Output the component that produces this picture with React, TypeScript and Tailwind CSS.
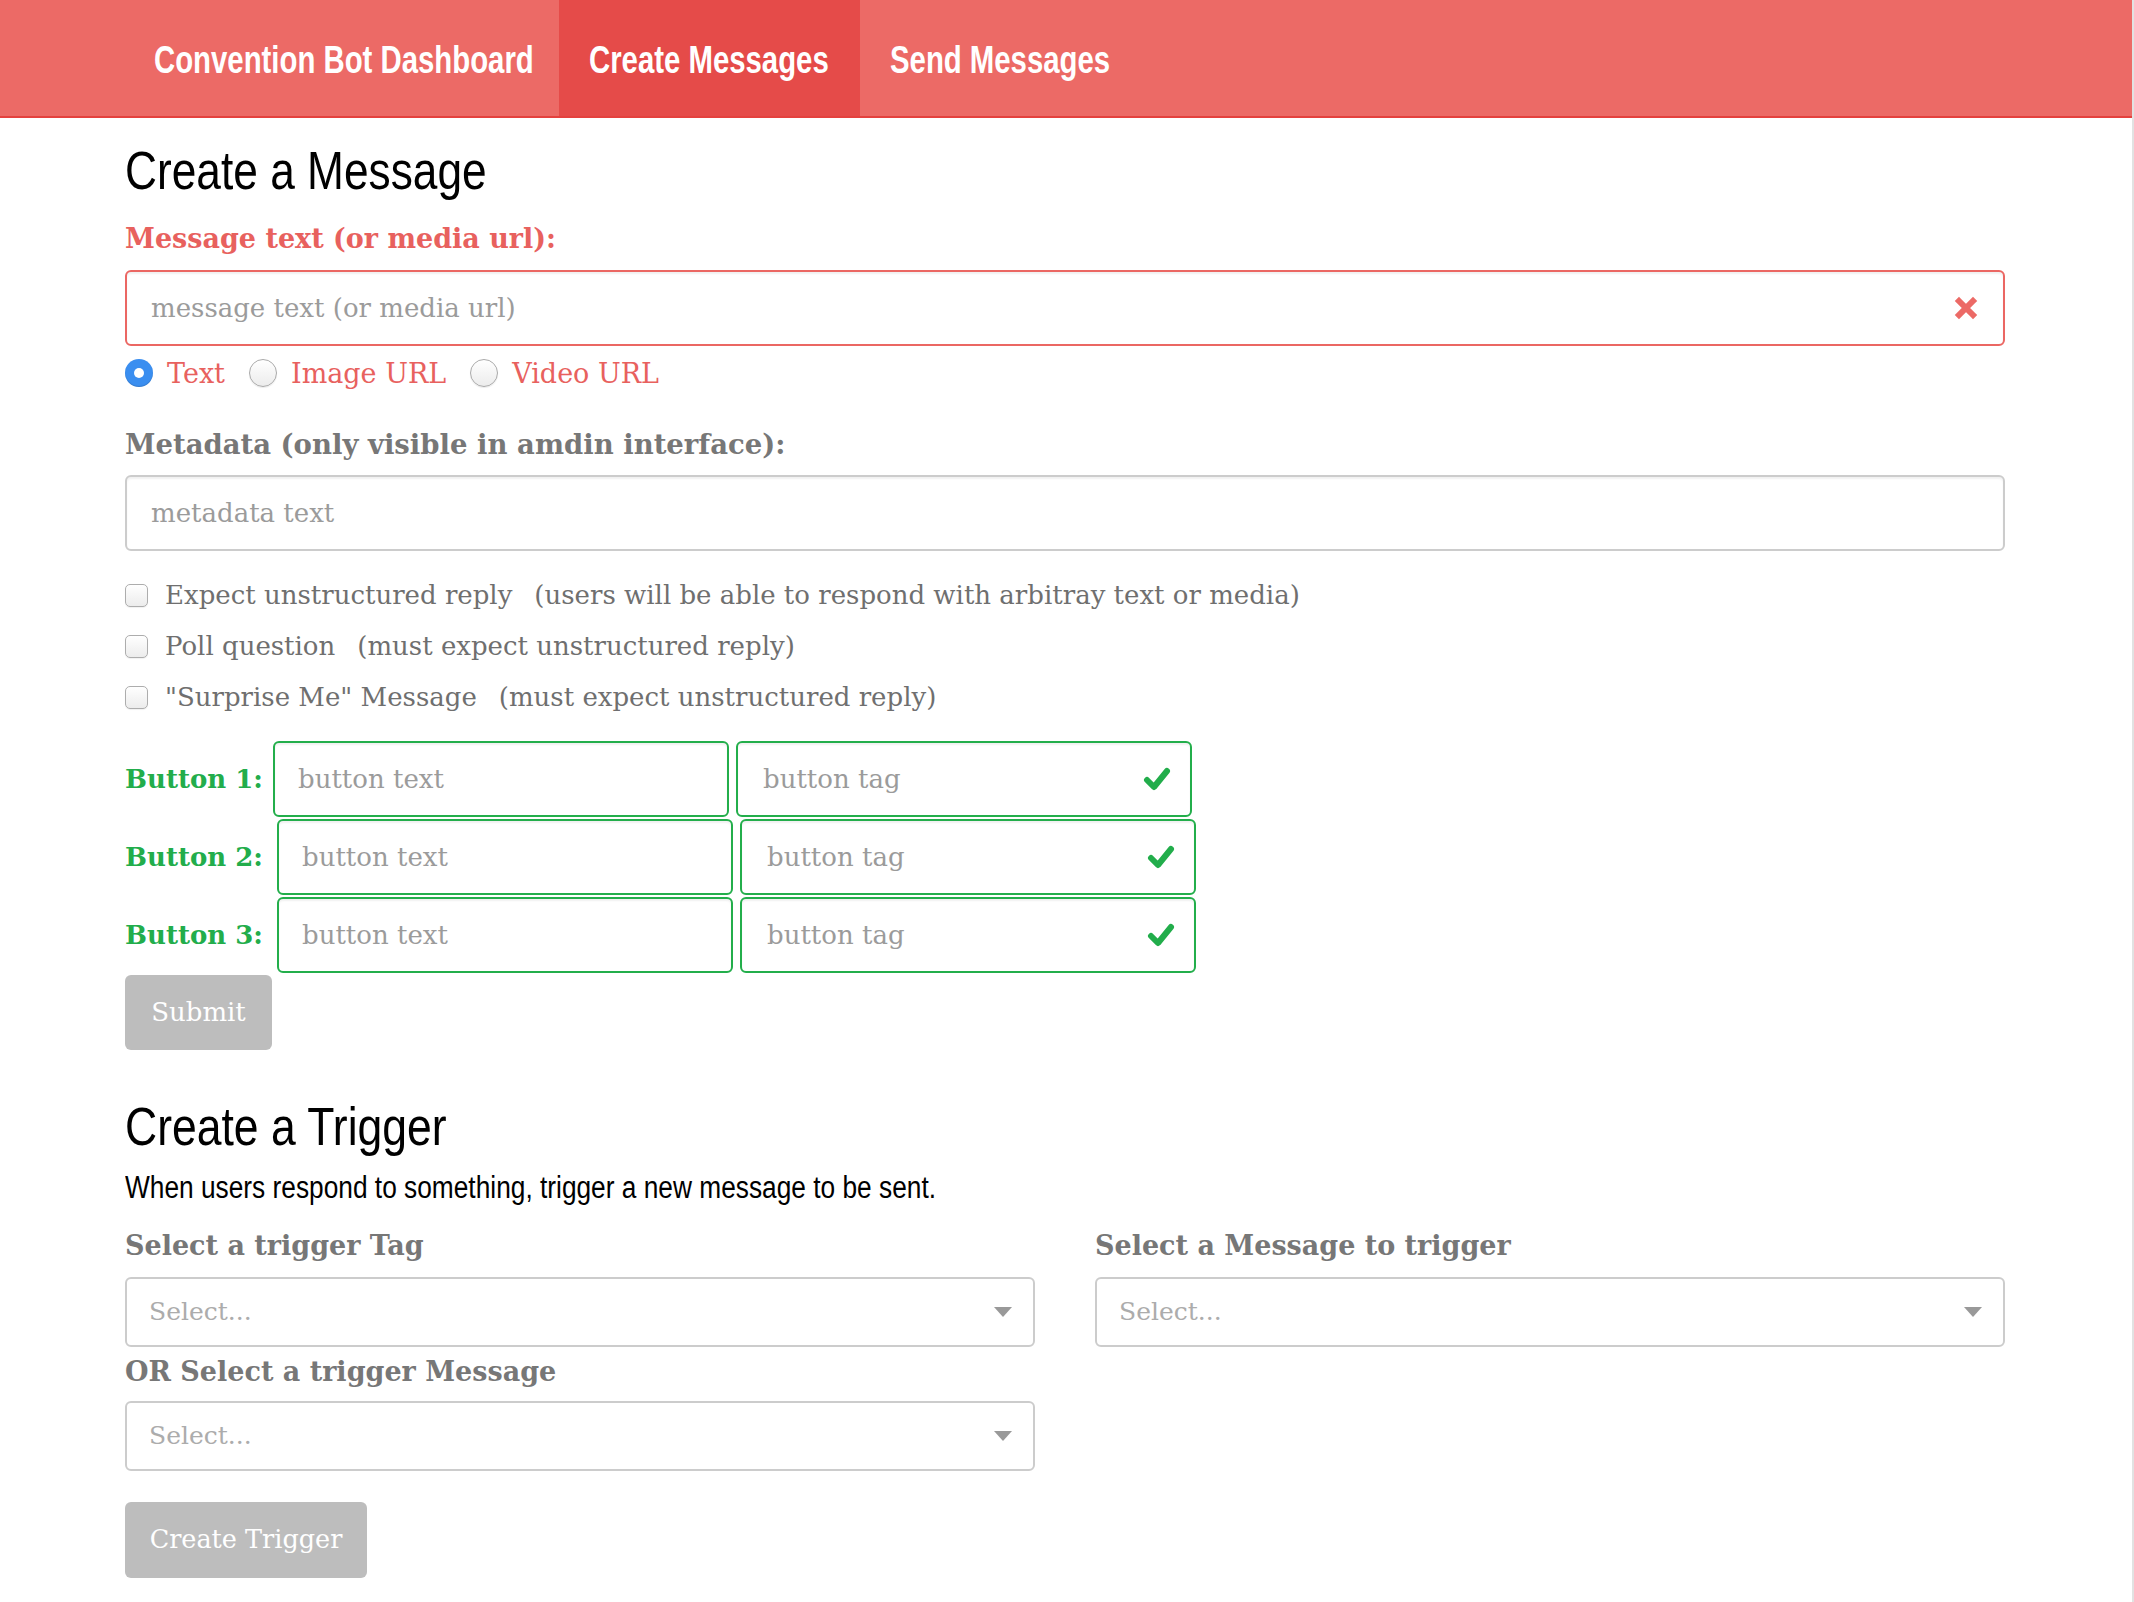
import React from 'react';

// News Cycle-like condensed face is not installed: Liberation Sans squeezed horizontally
const SANS = "font-['Liberation_Sans',Arial,sans-serif]";
const SERIF = "font-['DejaVu_Serif',serif]";

const Narrow = ({ children, scale }: { children: React.ReactNode; scale: string }) => (
    <span className={`inline-block origin-left whitespace-nowrap ${scale}`}>{children}</span>
);

const navItems = [
    { label: 'Convention Bot Dashboard', width: 'w-[435px]', active: false },
    { label: 'Create Messages', width: 'w-[301px]', active: true },
    { label: 'Send Messages', width: 'w-[280px]', active: false },
];

const Header = () => (
    <header className={`flex h-[118px] border-b-2 border-[#e4413e] bg-[#ec6a66] pl-[124px] ${SANS}`}>
        {navItems.map((item) => (
            <a
                key={item.label}
                className={`flex h-full shrink-0 items-center overflow-hidden pl-[30px] pt-[4px] text-[38px] font-bold leading-none text-white ${item.width} ${item.active ? 'bg-[#e54b49]' : ''}`}
            >
                <Narrow scale="scale-x-[0.772]">{item.label}</Narrow>
            </a>
        ))}
    </header>
);

const TimesIcon = () => (
    <svg viewBox="0 0 24 24" className="h-[24px] w-[24px] shrink-0">
        <path d="M5 5L19 19M19 5L5 19" stroke="#ec6a66" strokeWidth="6" strokeLinecap="square" fill="none" />
    </svg>
);

const CheckIcon = () => (
    <svg viewBox="0 0 28 26" className="h-[26px] w-[28px] shrink-0">
        <path d="M4 14L11 21L24 5" stroke="#22ad4b" strokeWidth="6" strokeLinejoin="round" strokeLinecap="round" fill="none" />
    </svg>
);

const Radio = ({ checked }: { checked?: boolean }) =>
    checked ? (
        <span className="flex h-[28px] w-[28px] shrink-0 items-center justify-center rounded-full bg-[#3a8ef0] shadow-[inset_0_-1px_1px_rgba(0,0,0,0.15)]">
            <span className="h-[10px] w-[10px] rounded-full bg-white" />
        </span>
    ) : (
        <span className="h-[28px] w-[28px] shrink-0 rounded-full border border-[#aaaaaa] bg-linear-to-b from-white to-[#ececec] shadow-[0_1px_1px_rgba(0,0,0,0.08)]" />
    );

const Checkbox = () => (
    <span className="h-[23px] w-[23px] shrink-0 rounded-[5px] border border-[#adadad] bg-linear-to-b from-white to-[#ececec] shadow-[0_1px_1px_rgba(0,0,0,0.06)]" />
);

const CaretDown = () => (
    <svg viewBox="0 0 18 10" className="h-[10px] w-[18px] shrink-0">
        <path d="M0 0H18L9 10Z" fill="#999999" />
    </svg>
);

const SelectBox = () => (
    <div className="mt-[18px] flex h-[70px] items-center justify-between rounded-[6px] border-2 border-[#cccccc] pl-[22px] pr-[21px]">
        <span className="text-[25px] leading-none text-[#acacac]">Select...</span>
        <CaretDown />
    </div>
);

const checkRows = [
    ['Expect unstructured reply', '(users will be able to respond with arbitray text or media)'],
    ['Poll question', '(must expect unstructured reply)'],
    ['"Surprise Me" Message', '(must expect unstructured reply)'],
];

const buttonRows = [
    { label: 'Button 1:', width: 'w-[148px]' },
    { label: 'Button 2:', width: 'w-[152px]' },
    { label: 'Button 3:', width: 'w-[152px]' },
];

export default function App() {
    return (
        <div className="min-h-screen w-full border-r-2 border-[#e2e2e2] bg-white">
            <Header />

            <main className={`pb-[24px] pl-[125px] pr-[127px] ${SERIF}`}>
                {/* Create a Message */}
                <h1 className={`mt-[26px] text-[53px] font-normal leading-none text-black ${SANS}`}>
                    <Narrow scale="scale-x-[0.835]">Create a Message</Narrow>
                </h1>

                <label className="mt-[28px] block text-[27px] font-bold leading-none text-[#e8615e]">
                    Message text (or media url):
                </label>
                <div className="mt-[18px] flex h-[76px] items-center rounded-[6px] border-2 border-[#eb6763] pl-[24px] pr-[25px] shadow-[inset_0_2px_2px_rgba(0,0,0,0.06)]">
                    <input
                        className="h-full flex-1 bg-transparent text-[26px] text-[#555] outline-none placeholder:text-[#9b9b9b]"
                        placeholder="message text (or media url)"
                    />
                    <TimesIcon />
                </div>

                <div className="mt-[13px] flex h-[28px] items-center text-[27px] leading-none text-[#e8615e]">
                    <Radio checked />
                    <span className="ml-[14px] mr-[24px]">Text</span>
                    <Radio />
                    <span className="ml-[14px] mr-[24px]">Image URL</span>
                    <Radio />
                    <span className="ml-[14px]">Video URL</span>
                </div>

                <label className="mt-[44px] block text-[27.5px] font-bold leading-none text-[#777777]">
                    Metadata (only visible in amdin interface):
                </label>
                <div className="mt-[16px] flex h-[76px] items-center rounded-[6px] border-2 border-[#cccccc] pl-[24px] pr-[25px] shadow-[inset_0_2px_2px_rgba(0,0,0,0.06)]">
                    <input
                        className="h-full flex-1 bg-transparent text-[26px] text-[#555] outline-none placeholder:text-[#9b9b9b]"
                        placeholder="metadata text"
                    />
                </div>

                <div className="mt-[19px] flex flex-col">
                    {checkRows.map(([main, note]) => (
                        <div key={main} className="flex h-[51px] items-center text-[26px] leading-none text-[#6f6f6f]">
                            <Checkbox />
                            <span className="ml-[17px]">{main}</span>
                            <span className="ml-[22px]">{note}</span>
                        </div>
                    ))}
                </div>

                {/* button rows */}
                <div className="mt-[18px] flex flex-col gap-[2px]">
                    {buttonRows.map((row) => (
                        <div key={row.label} className="flex items-center">
                            <span className={`${row.width} shrink-0 text-[26px] font-bold leading-none text-[#22ad4b]`}>
                                {row.label}
                            </span>
                            <div className="flex h-[76px] w-[456px] items-center rounded-[6px] border-2 border-[#23ae4b] pl-[23px] shadow-[inset_0_2px_2px_rgba(0,0,0,0.06)]">
                                <input
                                    className="h-full w-full bg-transparent text-[26px] outline-none placeholder:text-[#9b9b9b]"
                                    placeholder="button text"
                                />
                            </div>
                            <div className="ml-[7px] flex h-[76px] w-[456px] items-center rounded-[6px] border-2 border-[#23ae4b] pl-[25px] pr-[19px] shadow-[inset_0_2px_2px_rgba(0,0,0,0.06)]">
                                <input
                                    className="h-full flex-1 bg-transparent text-[26px] outline-none placeholder:text-[#9b9b9b]"
                                    placeholder="button tag"
                                />
                                <CheckIcon />
                            </div>
                        </div>
                    ))}
                </div>

                <button className="mt-[2px] flex h-[75px] w-[147px] items-center justify-center rounded-[6px] bg-[#bdbdbd] text-[26px] leading-none text-white">
                    Submit
                </button>

                {/* Create a Trigger */}
                <h1 className={`mt-[50px] text-[53px] font-normal leading-none text-black ${SANS}`}>
                    <Narrow scale="scale-x-[0.84]">Create a Trigger</Narrow>
                </h1>
                <p className={`mt-[19px] text-[31px] leading-none text-black ${SANS}`}>
                    <Narrow scale="scale-x-[0.848]">When users respond to something, trigger a new message to be sent.</Narrow>
                </p>

                <div className="mt-[29px] grid grid-cols-2 gap-x-[60px]">
                    <div>
                        <label className="block text-[27px] font-bold leading-none text-[#777777]">Select a trigger Tag</label>
                        <SelectBox />
                        <label className="mt-[11px] block text-[27px] font-bold leading-none text-[#777777]">
                            OR Select a trigger Message
                        </label>
                        <div className="-mt-[2px]">
                            <SelectBox />
                        </div>
                    </div>
                    <div>
                        <label className="block text-[27px] font-bold leading-none text-[#777777]">Select a Message to trigger</label>
                        <SelectBox />
                    </div>
                </div>

                <button className="mt-[31px] flex h-[76px] w-[242px] items-center justify-center rounded-[6px] bg-[#bdbdbd] text-[25.5px] leading-none text-white">
                    Create Trigger
                </button>
            </main>
        </div>
    );
}
